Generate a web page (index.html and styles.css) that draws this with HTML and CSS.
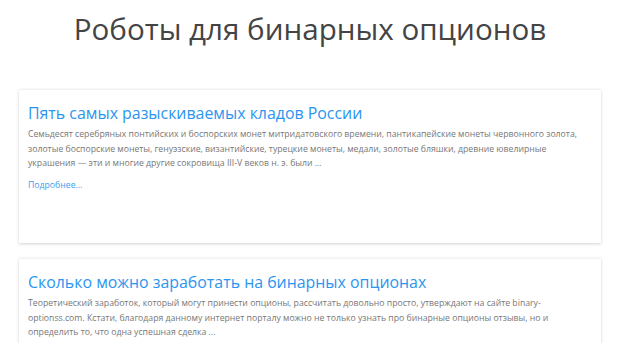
FILE: index.html
```html
<!DOCTYPE html>
<html lang="ru">
<head>
<meta charset="utf-8">
<link rel="stylesheet" href="styles.css">
</head>
<body>
<h1 class="page-title">Роботы для бинарных опционов</h1>
<main class="posts">
  <article class="card">
    <h2 class="card-title">Пять самых разыскиваемых кладов России</h2>
    <p class="card-text">Семьдесят серебряных понтийских и боспорских монет митридатовского времени, пантикапейские монеты червонного золота, золотые боспорские монеты, генуэзские, византийские, турецкие монеты, медали, золотые бляшки, древние ювелирные украшения — эти и многие другие сокровища III-V веков н. э. были ...</p>
    <a class="more" href="#">Подробнее...</a>
  </article>
  <article class="card">
    <h2 class="card-title">Сколько можно заработать на бинарных опционах</h2>
    <p class="card-text">Теоретический заработок, который могут принести опционы, рассчитать довольно просто, утверждают на сайте binary-optionss.com. Кстати, благодаря данному интернет порталу можно не только узнать про бинарные опционы отзывы, но и определить то, что одна успешная сделка ...</p>
    <a class="more" href="#">Подробнее...</a>
  </article>
</main>
</body>
</html>
```
FILE: styles.css
```css
html, body { margin: 0; padding: 0; background: #fff; }
body { font-family: "Open Sans", "DejaVu Sans", sans-serif; overflow: hidden; height: 343px; }
.page-title {
  margin: 0;
  padding-top: 10px;
  height: 77px;
  box-sizing: border-box;
  text-align: center;
  font-weight: 400;
  font-size: 29.6px;
  line-height: 38px;
  color: #444;
}
.posts { display: flex; flex-direction: column; gap: 15px; padding: 12px 19px 0; }
.card {
  background: #fff;
  height: 154px;
  flex-shrink: 0;
  box-sizing: border-box;
  padding: 13px 18px 0 9px;
  box-shadow: 0 1px 3px rgba(0,0,0,0.18);
  border-top: 1px solid #f2f2f2;
}
.card-title {
  margin: 0 0 4px;
  font-weight: 400;
  font-size: 15.9px;
  line-height: 20px;
  color: #2b95f0;
}
.card-text {
  margin: 0 0 7px;
  font-size: 8.7px;
  line-height: 14.6px;
  color: #777;
}
.more { display: block; font-size: 8.7px; line-height: 14px; color: #3a9cf2; text-decoration: none; }
```
